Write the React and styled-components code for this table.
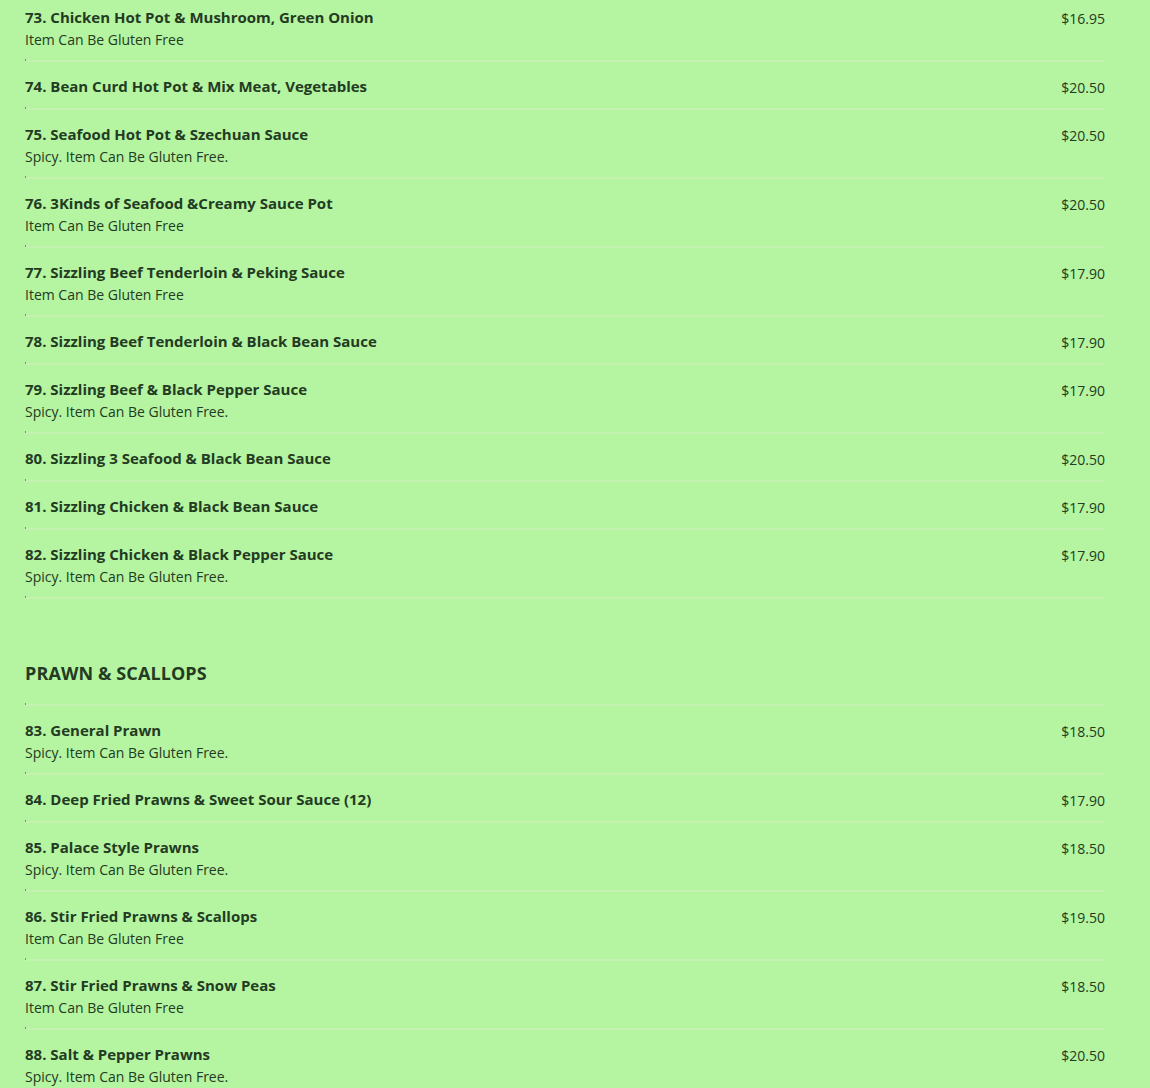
import React from "react";
import styled, { createGlobalStyle } from "styled-components";

const GlobalStyle = createGlobalStyle`
  html, body {
    margin: 0;
    padding: 0;
    background: #b5f4a1;
  }
  body {
    font-family: "Open Sans", "Liberation Sans", sans-serif;
    color: #233b22;
  }
`;

const Page = styled.div`
  min-height: 100vh;
  background: #b5f4a1;
  padding: 6px 45px 0 25px;
  box-sizing: border-box;
`;

const Section = styled.section`
  display: flex;
  flex-direction: column;
`;

const SectionTitle = styled.h2`
  margin: 61px 0 18px;
  font-size: 18px;
  line-height: 26px;
  font-weight: 700;
  letter-spacing: 0.1px;
  color: #233b22;
`;

const Item = styled.div`
  display: flex;
  flex-direction: column;
  padding: ${(p) => (p.$first ? "0" : "13px")} 0 ${(p) => (p.$desc ? "9px" : "10px")};
`;

const TitleRow = styled.div`
  display: flex;
  justify-content: space-between;
  align-items: baseline;
`;

const Name = styled.div`
  font-size: 15px;
  line-height: 22px;
  font-weight: 700;
`;

const Price = styled.div`
  font-size: 14px;
  line-height: 22px;
  font-weight: 400;
  position: relative;
  top: 1px;
`;

const Desc = styled.div`
  font-size: 14px;
  line-height: 22px;
`;

const Divider = styled.div`
  height: 2px;
  background: #c3f2b1;
  position: relative;

  &::before {
    content: "";
    position: absolute;
    left: 0;
    top: -1px;
    width: 1px;
    height: 2px;
    background: #6f9a63;
  }
`;

const hotPots = [
  ["73. Chicken Hot Pot & Mushroom, Green Onion", "$16.95", "Item Can Be Gluten Free"],
  ["74. Bean Curd Hot Pot & Mix Meat, Vegetables", "$20.50"],
  ["75. Seafood Hot Pot & Szechuan Sauce", "$20.50", "Spicy. Item Can Be Gluten Free."],
  ["76. 3Kinds of Seafood &Creamy Sauce Pot", "$20.50", "Item Can Be Gluten Free"],
  ["77. Sizzling Beef Tenderloin & Peking Sauce", "$17.90", "Item Can Be Gluten Free"],
  ["78. Sizzling Beef Tenderloin & Black Bean Sauce", "$17.90"],
  ["79. Sizzling Beef & Black Pepper Sauce", "$17.90", "Spicy. Item Can Be Gluten Free."],
  ["80. Sizzling 3 Seafood & Black Bean Sauce", "$20.50"],
  ["81. Sizzling Chicken & Black Bean Sauce", "$17.90"],
  ["82. Sizzling Chicken & Black Pepper Sauce", "$17.90", "Spicy. Item Can Be Gluten Free."],
];

const prawns = [
  ["83. General Prawn", "$18.50", "Spicy. Item Can Be Gluten Free."],
  ["84. Deep Fried Prawns & Sweet Sour Sauce (12)", "$17.90"],
  ["85. Palace Style Prawns", "$18.50", "Spicy. Item Can Be Gluten Free."],
  ["86. Stir Fried Prawns & Scallops", "$19.50", "Item Can Be Gluten Free"],
  ["87. Stir Fried Prawns & Snow Peas", "$18.50", "Item Can Be Gluten Free"],
  ["88. Salt & Pepper Prawns", "$20.50", "Spicy. Item Can Be Gluten Free."],
];

function MenuItem({ name, price, desc, first }) {
  return (
    <>
      <Item $first={first} $desc={!!desc}>
        <TitleRow>
          <Name>{name}</Name>
          <Price>{price}</Price>
        </TitleRow>
        {desc && <Desc>{desc}</Desc>}
      </Item>
      <Divider />
    </>
  );
}

export default function App() {
  return (
    <Page>
      <GlobalStyle />
      <Section>
        {hotPots.map(([name, price, desc], i) => (
          <MenuItem key={name} name={name} price={price} desc={desc} first={i === 0} />
        ))}
      </Section>
      <Section>
        <SectionTitle>PRAWN &amp; SCALLOPS</SectionTitle>
        <Divider />
        {prawns.map(([name, price, desc]) => (
          <MenuItem key={name} name={name} price={price} desc={desc} />
        ))}
      </Section>
    </Page>
  );
}
